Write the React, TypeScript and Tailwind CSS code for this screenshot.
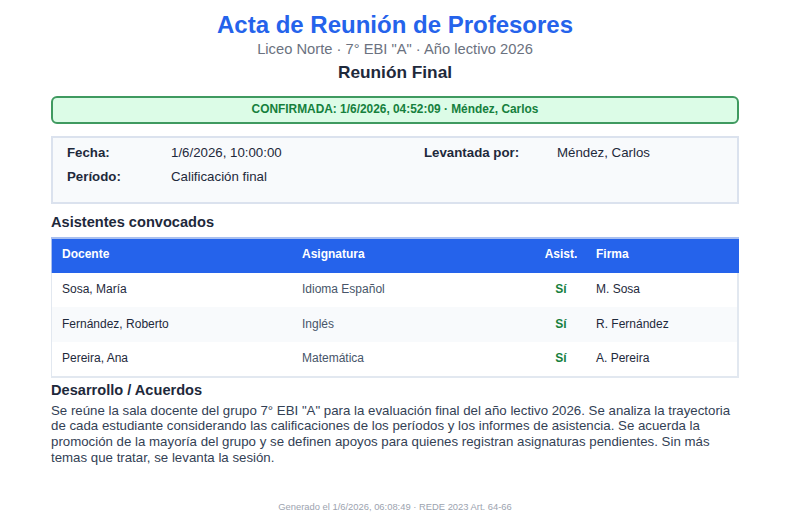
const rows = [
  { name: 'Sosa, María', subject: 'Idioma Español', sign: 'M. Sosa' },
  { name: 'Fernández, Roberto', subject: 'Inglés', sign: 'R. Fernández' },
  { name: 'Pereira, Ana', subject: 'Matemática', sign: 'A. Pereira' },
];

export default function App() {
  return (
    <div className="min-h-[522px] bg-white px-[51px] pt-[11px] font-['Liberation_Sans',Arial,sans-serif] text-[#1e293b]">
      {/* Header */}
      <div className="text-center">
        <h1 className="text-[24px] leading-[28px] font-bold text-[#2563eb]">Acta de Reunión de Profesores</h1>
        <p className="text-[14.72px] leading-[17px] mt-[2px] text-[#6b7280]">Liceo Norte · 7° EBI "A" · Año lectivo 2026</p>
        <h2 className="text-[17.28px] leading-[20px] mt-[4px] font-bold">Reunión Final</h2>
      </div>

      <div className="mt-[14px] h-[28px] flex items-center justify-center rounded-[6px] border-2 border-[#3f9a60] bg-[#dcfce7] text-[11.9px] font-bold text-[#15803d]">
        CONFIRMADA: 1/6/2026, 04:52:09 · Méndez, Carlos
      </div>

      {/* Datos */}
      <div className="mt-[12px] h-[68px] border-2 border-[#dbe2ee] bg-[#f8fafc] text-[13.28px] leading-[15px]">
        <div className="flex pt-[7px] pl-[14px]">
          <span className="w-[104px] font-bold">Fecha:</span>
          <span className="w-[253px]">1/6/2026, 10:00:00</span>
          <span className="w-[133px] font-bold">Levantada por:</span>
          <span>Méndez, Carlos</span>
        </div>
        <div className="flex pt-[9px] pl-[14px]">
          <span className="w-[104px] font-bold">Período:</span>
          <span>Calificación final</span>
        </div>
      </div>

      <h3 className="mt-[10px] text-[14.6px] leading-[17px] font-bold">Asistentes convocados</h3>

      <div className="mt-[6px] border-b-2 border-[#e2e8f0] text-[12px]">
        <div className="flex h-[36px] items-center pb-[4px] border-t-2 border-l border-[#a8bff0] bg-[#2563eb] font-bold text-white">
          <span className="w-[250px] pl-[10px]">Docente</span>
          <span className="w-[232px]">Asignatura</span>
          <span className="w-[54px] text-center">Asist.</span>
          <span className="pl-[8px]">Firma</span>
        </div>
        {rows.map((r, i) => (
          <div key={r.name} className={`flex h-[34.3px] items-center border-l border-r-2 border-[#e2e8f0] ${i === 0 ? 'pb-[3px]' : 'pb-[1px]'} ${i === 1 ? 'bg-[#f8fafc]' : 'bg-white'}`}>
            <span className="w-[250px] pl-[10px]">{r.name}</span>
            <span className="w-[232px] text-[#475569]">{r.subject}</span>
            <span className="w-[54px] text-center font-bold text-[#15803d]">Sí</span>
            <span className="pl-[8px]">{r.sign}</span>
          </div>
        ))}
      </div>

      <h3 className="mt-[4px] text-[14.6px] leading-[17px] font-bold">Desarrollo / Acuerdos</h3>
      <p className="mt-[4px] text-[13.28px] leading-[15.6px] text-[#334155]">
        Se reúne la sala docente del grupo 7° EBI "A" para la evaluación final del año lectivo 2026. Se analiza la trayectoria de cada estudiante considerando las calificaciones de los períodos y los informes de asistencia. Se acuerda la promoción de la mayoría del grupo y se definen apoyos para quienes registran asignaturas pendientes. Sin más temas que tratar, se levanta la sesión.
      </p>

      <p className="mt-[36px] text-center text-[9.4px] leading-[11px] text-[#9ca3af]">Generado el 1/6/2026, 06:08:49 · REDE 2023 Art. 64-66</p>
    </div>
  );
}
